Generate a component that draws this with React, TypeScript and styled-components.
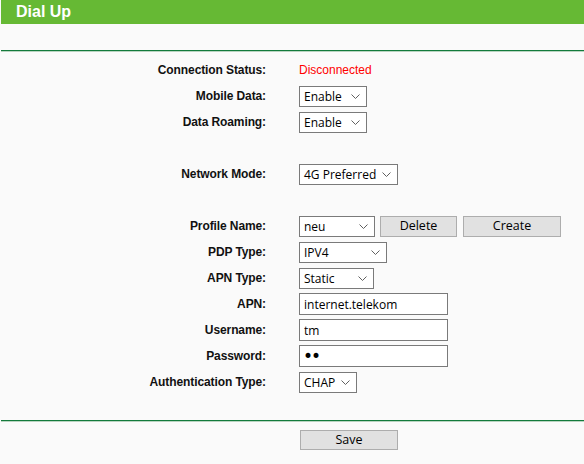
import React from 'react';
import styled, { createGlobalStyle } from 'styled-components';

const GlobalStyle = createGlobalStyle`
	html, body {
		margin: 0;
		padding: 0;
		background: #fafafa;
	}
	body {
		font-family: 'Liberation Sans', Arial, sans-serif;
	}
`;

type Row =
	| { kind: 'spacer' }
	| { kind: 'status'; label: string; value: string }
	| { kind: 'select'; label: string; value: string; width: number }
	| { kind: 'input'; label: string; value: string; password?: boolean }
	| { kind: 'profile'; label: string; value: string };

const rows: Row[] = [
	{ kind: 'status', label: 'Connection Status:', value: 'Disconnected' },
	{ kind: 'select', label: 'Mobile Data:', value: 'Enable', width: 68 },
	{ kind: 'select', label: 'Data Roaming:', value: 'Enable', width: 68 },
	{ kind: 'spacer' },
	{ kind: 'select', label: 'Network Mode:', value: '4G Preferred', width: 99 },
	{ kind: 'spacer' },
	{ kind: 'profile', label: 'Profile Name:', value: 'neu' },
	{ kind: 'select', label: 'PDP Type:', value: 'IPV4', width: 88 },
	{ kind: 'select', label: 'APN Type:', value: 'Static', width: 75 },
	{ kind: 'input', label: 'APN:', value: 'internet.telekom' },
	{ kind: 'input', label: 'Username:', value: 'tm' },
	{ kind: 'input', label: 'Password:', value: 'ab', password: true },
	{ kind: 'select', label: 'Authentication Type:', value: 'CHAP', width: 58 },
];

const Chevron = () => (
	<svg width="9" height="5" viewBox="0 0 9 5">
		<path d="M0.5 0.5 L4.5 4.5 L8.5 0.5" fill="none" stroke="#606060" strokeWidth="1" />
	</svg>
);

const Select = ({ value, width }: { value: string; width: number }) => (
	<SelectBox $width={width}>
		<SelectText>{value}</SelectText>
		<Chevron />
	</SelectBox>
);

const renderControl = (row: Row) => {
	switch (row.kind) {
		case 'status':
			return <Status>{row.value}</Status>;
		case 'select':
			return <Select value={row.value} width={row.width} />;
		case 'input':
			return (
				<TextInput
					type={row.password ? 'password' : 'text'}
					$password={row.password}
					defaultValue={row.value}
					readOnly
				/>
			);
		case 'profile':
			return (
				<ProfileControls>
					<Select value={row.value} width={76} />
					<Button $width={77}>Delete</Button>
					<Button $width={98}>Create</Button>
				</ProfileControls>
			);
		default:
			return null;
	}
};

export default function App() {
	return (
		<Page>
			<GlobalStyle />
			<Header>Dial Up</Header>
			<Divider $top={26} />
			<Form>
				{rows.map((row, i) =>
					row.kind === 'spacer' ? (
						<Spacer key={i} />
					) : (
						<React.Fragment key={i}>
							<Label>{row.label}</Label>
							<Control>{renderControl(row)}</Control>
						</React.Fragment>
					),
				)}
			</Form>
			<Divider $top={25} />
			<Footer>
				<Button $width={98} $height={20}>
					Save
				</Button>
			</Footer>
		</Page>
	);
}

const Page = styled.div`
	width: 584px;
	height: 464px;
	padding-left: 1px;
	box-sizing: border-box;
	background: #fafafa;
	overflow: hidden;
`;

const Header = styled.div`
	height: 24px;
	background: #66b934;
	color: #fff;
	font-weight: bold;
	font-size: 16px;
	line-height: 24px;
	padding-left: 15px;
`;

const Divider = styled.div<{ $top: number }>`
	margin-top: ${({ $top }) => $top}px;
	height: 0;
	border-top: 1px solid #137a3c;
	border-bottom: 1px solid #b9d4c0;
`;

const Form = styled.div`
	margin-top: 5px;
	display: grid;
	grid-template-columns: 265px auto;
	column-gap: 33px;
	grid-auto-rows: 26px;
	align-items: center;
`;

const Spacer = styled.div`
	grid-column: 1 / -1;
`;

const Label = styled.div`
	text-align: right;
	font-weight: bold;
	font-size: 12px;
	letter-spacing: -0.1px;
	color: #111;
`;

const Control = styled.div`
	display: flex;
	align-items: center;
`;

const Status = styled.span`
	color: #f00;
	font-size: 12px;
`;

const SelectBox = styled.div<{ $width: number }>`
	width: ${({ $width }) => $width}px;
	height: 21px;
	box-sizing: border-box;
	border: 1px solid #7a7a7a;
	background: #fff;
	display: flex;
	align-items: center;
	justify-content: space-between;
	padding: 1px 6px 0 4px;
	font-family: 'Open Sans', 'Liberation Sans', sans-serif;
	font-size: 12px;
	color: #000;
`;

const SelectText = styled.span`
	white-space: nowrap;
`;

const TextInput = styled.input<{ $password?: boolean }>`
	width: 149px;
	height: 22px;
	box-sizing: border-box;
	border: 1px solid #7a7a7a;
	background: #fff;
	padding: ${({ $password }) => ($password ? '0 0 0 3px' : '1px 0 0 4px')};
	margin: 0;
	font-family: ${({ $password }) =>
		$password ? "'DejaVu Sans', sans-serif" : "'Open Sans', 'Liberation Sans', sans-serif"};
	font-size: ${({ $password }) => ($password ? '17px' : '12px')};
	letter-spacing: ${({ $password }) => ($password ? '-2px' : '0')};
	color: #000;
	outline: none;
`;

const ProfileControls = styled.div`
	display: flex;
	align-items: center;
	gap: 5px;
`;

const Button = styled.button<{ $width: number; $height?: number }>`
	width: ${({ $width }) => $width}px;
	height: ${({ $height }) => $height ?? 21}px;
	box-sizing: border-box;
	border: 1px solid #adadad;
	background: #e1e1e1;
	padding: 1px 0 0;
	margin: 0;
	font-family: 'Open Sans', 'Liberation Sans', sans-serif;
	font-size: 12.5px;
	color: #000;
	line-height: 1;
	& + & {
		margin-left: 1px;
	}
`;

const Footer = styled.div`
	margin-top: 8px;
	padding-left: 299px;
	display: flex;
`;
